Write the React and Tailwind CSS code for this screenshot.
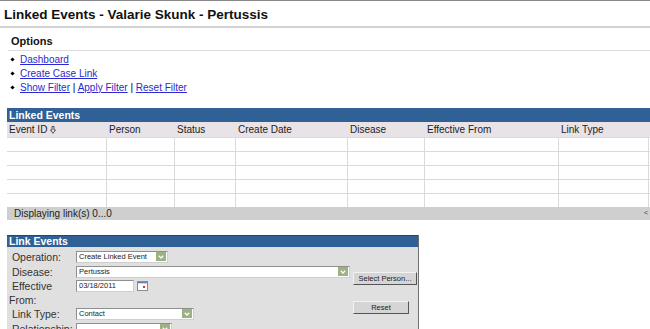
import React from 'react';

const cols = ['Event ID', 'Person', 'Status', 'Create Date', 'Disease', 'Effective From', 'Link Type'];
const grid = 'grid grid-cols-[100px_68px_61px_112px_77px_134px_90px]';

const SortArrow = () => (
  <svg className="ml-[3px] inline-block" width="6" height="8" viewBox="0 0 6 8">
    <path d="M2 0.5h2v3.5h1.5L3 7.3 0.5 4H2z" fill="none" stroke="#444" strokeWidth="0.9" />
  </svg>
);

const DropArrow = () => (
  <div className="mr-px flex h-[9px] w-[10px] items-center justify-center bg-[#9db183]">
    <svg width="6" height="4" viewBox="0 0 6 4">
      <path d="M0.8 0.8L3 3 5.2 0.8" fill="none" stroke="#fff" strokeWidth="1.3" />
    </svg>
  </div>
);

const Field = ({ value, width, arrow = true }) => (
  <div className={`flex h-[12px] items-center border border-[#8f8f8f] border-b-[#cfcfcf] border-r-[#cfcfcf] bg-white ${width}`}>
    <span className="flex-1 truncate pl-[2px] text-[7.5px] leading-none text-[#222]">{value}</span>
    {arrow && <DropArrow />}
  </div>
);

const CalendarIcon = () => (
  <svg className="ml-[3px] mt-[1px]" width="11" height="10" viewBox="0 0 11 10">
    <rect x="0.5" y="0.5" width="10" height="9" fill="#fff" stroke="#8a8a98" />
    <rect x="1" y="1" width="9" height="1.3" fill="#6a7fb0" />
    <rect x="6" y="5" width="2" height="2" fill="#cc3333" />
  </svg>
);

const Button = ({ children, width }) => (
  <div className={`flex h-[13px] items-center justify-center border border-[#f2f2f2] border-b-[#555] border-r-[#555] bg-[#d5d5d5] text-[7.5px] text-[#222] ${width}`}>
    {children}
  </div>
);

const Label = ({ children }) => (
  <div className="w-[67px] text-[10.5px] leading-[14px] text-[#333]">{'\u00a0'}{children}</div>
);

const App = () => {
  return (
    <div className="min-h-screen overflow-hidden bg-white font-['Liberation_Sans',Arial,sans-serif] text-[#111]">
      <div className="border-t border-[#8a8a8a]">
        <h1 className="border-b-2 border-[#d2d2d2] pl-1 pt-[6px] pb-[3px] text-[13.5px] font-bold leading-[16px]">
          Linked Events - Valarie Skunk - Pertussis
        </h1>
      </div>

      <div className="ml-[8px] border-b border-[#dcdcdc] pl-[3px] pt-[6px] pb-[2px] text-[11px] font-bold leading-[14px]">
        Options
      </div>
      <ul className="mt-px">
        {[['Dashboard'], ['Create Case Link'], ['Show Filter', 'Apply Filter', 'Reset Filter']].map((links, i) => (
          <li key={i} className="flex h-[14px] items-center pl-[10px] text-[10px]">
            <span className="ml-px h-[3px] w-[3px] rotate-45 bg-black" />
            <span className="ml-[6px]">
              {links.map((l, j) => (
                <React.Fragment key={l}>
                  {j > 0 && <span className="text-black"> | </span>}
                  <a href="#" className="text-[#2a2ad0] underline">{l}</a>
                </React.Fragment>
              ))}
            </span>
          </li>
        ))}
      </ul>

      <div className="ml-[7px] mt-[14px]">
        <div className="h-[14px] bg-[#2f6096] pl-[2px] text-[10.5px] font-bold leading-[14px] text-white">Linked Events</div>
        <div className={`${grid} h-[15px] bg-[#e7e3e7]`}>
          {cols.map((c, i) => (
            <div key={c} className="flex items-center pl-[2px] text-[10px] text-[#222]">
              {c}
              {i === 0 && <SortArrow />}
            </div>
          ))}
        </div>
        {[0, 1, 2, 3, 4].map((r) => (
          <div key={r} className={`${grid} h-[14px] border-t border-[#dadada] bg-white`}>
            {cols.map((c) => (
              <div key={c} className="border-r border-[#dadada]" />
            ))}
          </div>
        ))}
        <div className="flex h-[13px] items-center justify-between bg-[#cfcfcf] pl-[7px] text-[10px] text-[#222]">
          <span>Displaying link(s) 0...0</span>
          <span className="pr-[2px] text-[7px] text-[#444]">&lt;</span>
        </div>
      </div>

      <div className="ml-[7px] mt-[15px] w-[412px] border-r border-[#6f6f6f] bg-[#e0e0e0]">
        <div className="h-[12px] border-t border-[#1f4676] bg-[#2f6096] pl-[2px] text-[10.5px] font-bold leading-[11px] text-white">
          Link Events
        </div>
        <div className="flex">
          <div className="w-[346px] pl-[2px] pt-[2px]">
            <div className="flex h-[15px] items-center">
              <Label>Operation:</Label>
              <Field value="Create Linked Event" width="w-[92px]" />
            </div>
            <div className="flex h-[15px] items-center">
              <Label>Disease:</Label>
              <Field value="Pertussis" width="w-[274px]" />
            </div>
            <div className="flex h-[27px] items-start">
              <Label>Effective From:</Label>
              <div className="mt-px flex">
                <Field value="03/18/2011" width="w-[58px]" arrow={false} />
                <CalendarIcon />
              </div>
            </div>
            <div className="flex h-[15px] items-center">
              <Label>Link Type:</Label>
              <Field value="Contact" width="w-[118px]" />
            </div>
            <div className="flex h-[15px] items-center">
              <Label>Relationship:</Label>
              <Field value="" width="w-[96px]" />
            </div>
          </div>
          <div className="flex flex-col items-start pt-[25px]">
            <Button width="w-[64px]">Select Person...</Button>
            <div className="mt-[16px]">
              <Button width="w-[56px]">Reset</Button>
            </div>
          </div>
        </div>
      </div>
    </div>
  );
};

export default App;
